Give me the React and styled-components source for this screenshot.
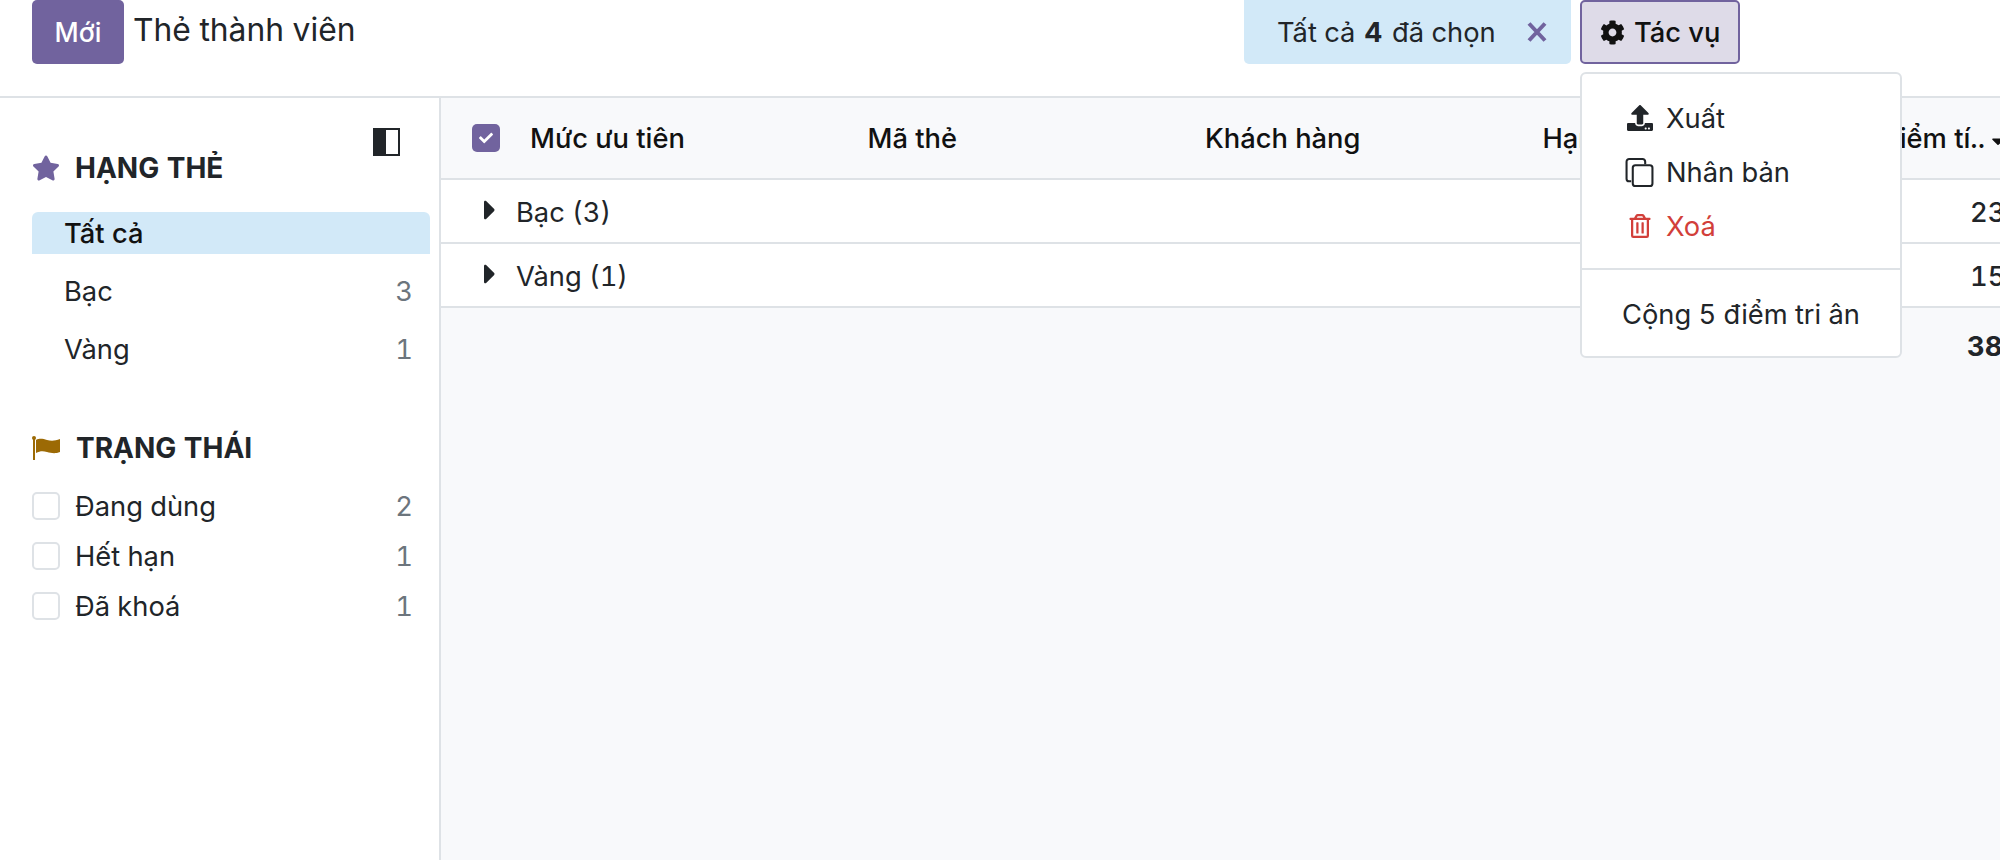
import React from "react";
import styled, { createGlobalStyle } from "styled-components";
import { FaCaretRight, FaCaretDown, FaCheck, FaCog, FaRegTrashAlt, FaStar, FaUpload } from "react-icons/fa";

const Global = createGlobalStyle`
  * { box-sizing: border-box; }
  html, body { margin: 0; padding: 0; height: 860px; overflow: hidden; background: #fff; }
  body { font-family: Inter, "Noto Sans", sans-serif; font-size: 27.3px; color: #212529; font-variant-numeric: tabular-nums; }
`;

const Page = styled.div`
  display: flex;
  flex-direction: column;
  width: 2000px;
  height: 860px;
  overflow: hidden;
`;
const TopBar = styled.header`
  display: flex;
  align-items: flex-start;
  height: 98px;
  padding: 0 260px 0 32px;
  border-bottom: 2px solid #dee2e6;
`;
const NewButton = styled.button`
  width: 92px;
  height: 64px;
  border: 0;
  border-radius: 5px;
  background: #71639e;
  color: #fff;
  font: 500 26.5px Inter, sans-serif;
`;
const Title = styled.h1`
  margin: 0 0 0 9px;
  font-size: 31.8px;
  font-weight: 400;
  line-height: 60px;
  flex: 1;
`;
const Selection = styled.div`
  display: flex;
  align-items: center;
  width: 327px;
  height: 64px;
  margin-right: 9px;
  padding: 0 24px 0 33px;
  border-radius: 0 0 5px 5px;
  background: #d2e9f8;
  b { font-weight: 700; margin: 0 10px 0 9px; }
  svg { margin-left: auto; }
`;
const ActionWrap = styled.div`
  position: relative;
  width: 160px;
`;
const ActionButton = styled.button`
  display: flex;
  align-items: center;
  gap: 9px;
  width: 160px;
  height: 64px;
  padding: 0 0 0 18px;
  border: 2px solid #71639e;
  border-radius: 5px;
  background: #dedbe8;
  color: #111;
  font: 500 27.3px Inter, sans-serif;
  svg { width: 25px; height: 25px; }
`;
const Menu = styled.div`
  position: absolute;
  z-index: 2;
  top: 72px;
  left: 0;
  width: 322px;
  height: 286px;
  padding-top: 17px;
  background: #fff;
  border: 2px solid #dee2e6;
  border-radius: 6px;
`;
const MenuItem = styled.div`
  display: flex;
  align-items: center;
  height: 54px;
  padding-left: ${p => (p.$plain ? 40 : 43)}px;
  color: ${p => (p.$danger ? "#d23f3a" : "#212529")};
`;
const MenuIcon = styled.span`
  display: flex;
  justify-content: center;
  width: 29px;
  margin-right: 12px;
`;
const MenuDivider = styled.div`
  height: 2px;
  margin: 15px 0 17px;
  background: #dee2e6;
`;

const Body = styled.div`
  display: flex;
  flex: 1;
  min-height: 0;
`;
const Sidebar = styled.aside`
  flex: 0 0 441px;
  padding: 30px 9px 0 32px;
  border-right: 2px solid #dee2e6;
`;
const ToggleRow = styled.div`
  display: flex;
  justify-content: flex-end;
  height: 28px;
  padding-right: 30px;
`;
const SectionHead = styled.h2`
  display: flex;
  align-items: center;
  gap: ${p => p.$gap}px;
  height: 24px;
  margin: ${p => p.$top}px 0 0;
  font-size: 28px;
  font-weight: 700;
  white-space: nowrap;
`;
const FilterList = styled.div`
  display: flex;
  flex-direction: column;
  gap: 16px;
  margin-top: 32px;
`;
const FilterRow = styled.div`
  display: flex;
  align-items: center;
  justify-content: space-between;
  height: 42px;
  padding: ${p => (p.$active ? 0 : 1)}px 17px 0 32px;
  border-radius: 6px 6px 0 0;
  background: ${p => (p.$active ? "#d2e9f8" : "transparent")};
  font-weight: ${p => (p.$active ? 500 : 400)};
  color: ${p => (p.$active ? "#111" : "#212529")};
`;
const Count = styled.span`
  color: #6c757d;
  font-weight: 400;
`;
const CheckList = styled.div`
  margin-top: 21px;
`;
const CheckRow = styled.label`
  display: flex;
  align-items: center;
  height: 50px;
  padding-right: 17px;
`;
const CheckBox = styled.span`
  width: 28px;
  height: 28px;
  margin-right: 15px;
  border: 2px solid #dee2e6;
  border-radius: 5px;
  background: #fff;
`;
const Grow = styled.span`
  flex: 1;
`;

const Main = styled.main`
  flex: 1;
  min-width: 0;
  overflow: hidden;
  background: #f8f9fb;
`;
const HeadRow = styled.div`
  display: flex;
  align-items: center;
  height: 82px;
  border-bottom: 2px solid #dee2e6;
  font-weight: 500;
  color: #111;
  white-space: nowrap;
`;
const SelectCell = styled.div`
  flex: 0 0 89px;
  padding-left: 31px;
`;
const AllCheck = styled.span`
  display: flex;
  align-items: center;
  justify-content: center;
  width: 28px;
  height: 28px;
  border-radius: 5px;
  background: #71639e;
  color: #fff;
  svg { width: 14px; height: 14px; }
`;
const HeadCell = styled.div`
  flex: 0 0 337.5px;
`;
const SortCell = styled.div`
  display: flex;
  align-items: center;
  justify-content: flex-end;
  flex: 0 0 120px;
  svg { flex: none; width: 20px; height: 20px; margin-left: 3px; margin-right: -6px; margin-top: 6px; }
`;
const GroupRow = styled.div`
  display: flex;
  align-items: center;
  height: 64px;
  padding: 2px 0 0 33px;
  background: #fff;
  border-bottom: 2px solid #dee2e6;
  svg { width: 32px; height: 32px; margin-right: 10px; margin-top: -4px; }
`;
const Amount = styled.span`
  margin-left: auto;
  width: 30px;
  font-weight: 500;
  white-space: nowrap;
`;
const TotalRow = styled.div`
  display: flex;
  height: 76px;
  align-items: center;
  padding-top: 1px;
`;
const TotalAmount = styled.span`
  margin-left: auto;
  width: 33px;
  font-weight: 700;
  white-space: nowrap;
`;

const ToggleIcon = () => (
  <svg width="27" height="28" viewBox="0 0 27 28">
    <rect x="1" y="1" width="25" height="26" fill="#fff" stroke="#212529" strokeWidth="2" />
    <rect x="1" y="1" width="12" height="26" fill="#212529" />
  </svg>
);
const FlagIcon = () => (
  <svg width="28" height="24" viewBox="0 0 28 24">
    <rect x="1" y="1" width="2" height="23" fill="#9c6a05" />
    <circle cx="2" cy="2" r="2" fill="#9c6a05" />
    <path d="M4 4c4-2 7-1 11 0s8 1 13-1v13c-5 2-9 1-13 0s-7-1-11 1z" fill="#9c6a05" />
  </svg>
);
const CloneIcon = () => (
  <svg width="29" height="29" viewBox="0 0 28 28" fill="none" stroke="#212529" strokeWidth="2">
    <rect x="7.5" y="7" width="19" height="20" rx="2.5" />
    <path d="M6 22.5H4A2.5 2.5 0 0 1 1.500 20V3.500A2.500 2.500 0 0 1 4 1h13a2.500 2.500 0 0 1 2.500 2.500V6" />
  </svg>
);
const CloseIcon = () => (
  <svg width="20" height="20" viewBox="0 0 20 20" fill="none" stroke="#71639e" strokeWidth="4">
    <path d="M2 1.500 18 18.500M18 1.500 2 18.500" />
  </svg>
);

export default function App() {
  return (
    <Page>
      <Global />
      <TopBar>
        <NewButton>Mới</NewButton>
        <Title>Thẻ thành viên</Title>
        <Selection>
          Tất cả<b>4</b>đã chọn
          <CloseIcon />
        </Selection>
        <ActionWrap>
          <ActionButton><FaCog />Tác vụ</ActionButton>
          <Menu>
            <MenuItem><MenuIcon><FaUpload size={26} /></MenuIcon>Xuất</MenuItem>
            <MenuItem><MenuIcon><CloneIcon /></MenuIcon>Nhân bản</MenuItem>
            <MenuItem $danger><MenuIcon><FaRegTrashAlt size={24} /></MenuIcon>Xoá</MenuItem>
            <MenuDivider />
            <MenuItem $plain>Cộng 5 điểm tri ân</MenuItem>
          </Menu>
        </ActionWrap>
      </TopBar>
      <Body>
        <Sidebar>
          <ToggleRow><ToggleIcon /></ToggleRow>
          <SectionHead $top={0} $gap={15}><FaStar color="#71639e" size={28} />HẠNG THẺ</SectionHead>
          <FilterList>
            <FilterRow $active>Tất cả</FilterRow>
            <FilterRow>Bạc<Count>3</Count></FilterRow>
            <FilterRow>Vàng<Count>1</Count></FilterRow>
          </FilterList>
          <SectionHead $top={66} $gap={16}><FlagIcon />TRẠNG THÁI</SectionHead>
          <CheckList>
            <CheckRow><CheckBox /><Grow>Đang dùng</Grow><Count>2</Count></CheckRow>
            <CheckRow><CheckBox /><Grow>Hết hạn</Grow><Count>1</Count></CheckRow>
            <CheckRow><CheckBox /><Grow>Đã khoá</Grow><Count>1</Count></CheckRow>
          </CheckList>
        </Sidebar>
        <Main>
          <HeadRow>
            <SelectCell><AllCheck><FaCheck /></AllCheck></SelectCell>
            <HeadCell>Mức ưu tiên</HeadCell>
            <HeadCell>Mã thẻ</HeadCell>
            <HeadCell>Khách hàng</HeadCell>
            <HeadCell>Hạng</HeadCell>
            <SortCell>Điểm tí..<FaCaretDown /></SortCell>
          </HeadRow>
          <GroupRow><FaCaretRight />Bạc (3)<Amount>23</Amount></GroupRow>
          <GroupRow><FaCaretRight />Vàng (1)<Amount>15</Amount></GroupRow>
          <TotalRow><TotalAmount>38</TotalAmount></TotalRow>
        </Main>
      </Body>
    </Page>
  );
}
